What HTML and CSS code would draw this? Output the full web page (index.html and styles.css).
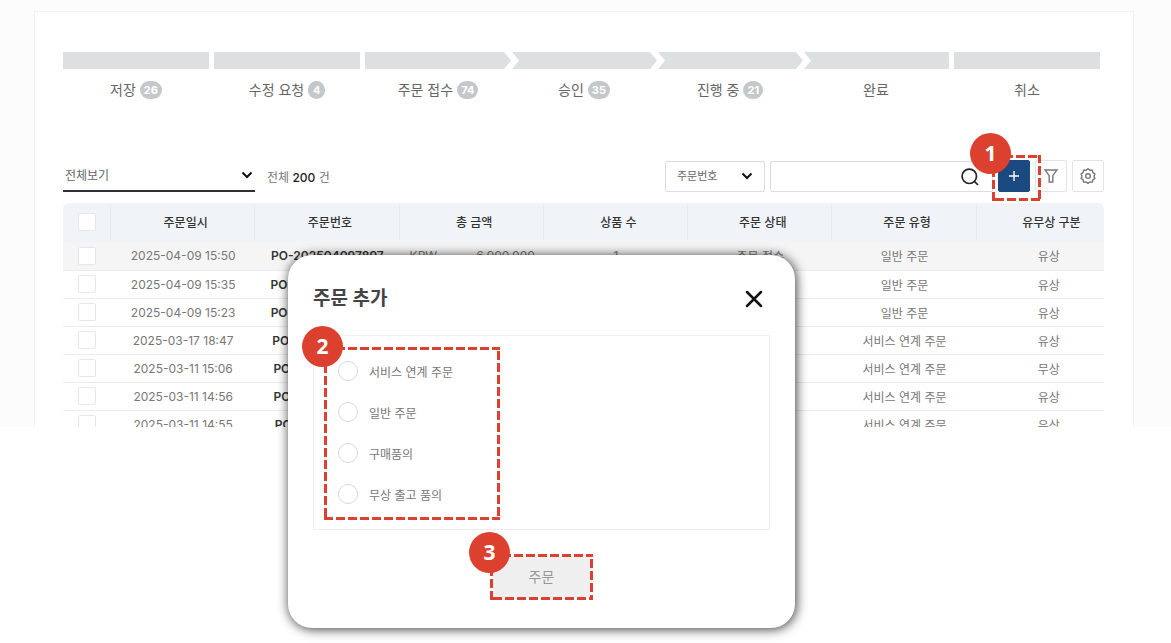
FILE: index.html
```html
<!DOCTYPE html>
<html lang="ko">
<head>
<meta charset="utf-8">
<meta name="viewport" content="width=device-width, initial-scale=1">
<title>주문 관리</title>
<link rel="stylesheet" href="styles.css">
</head>
<body>
<main class="screen">
  <section class="panel">
    <ol class="steps">
      <li class="step"><span class="step-bar"></span><span class="step-label">저장 <span class="count">26</span></span></li>
      <li class="step"><span class="step-bar"></span><span class="step-label">수정 요청 <span class="count">4</span></span></li>
      <li class="step step-joined"><span class="step-bar bar-point"></span><span class="step-label">주문 접수 <span class="count">74</span></span></li>
      <li class="step step-joined"><span class="step-bar bar-both"></span><span class="step-label">승인 <span class="count">35</span></span></li>
      <li class="step step-joined"><span class="step-bar bar-both"></span><span class="step-label">진행 중 <span class="count">21</span></span></li>
      <li class="step"><span class="step-bar bar-notch"></span><span class="step-label">완료</span></li>
      <li class="step"><span class="step-bar"></span><span class="step-label">취소</span></li>
    </ol>

    <div class="toolbar">
      <div class="select-wrap view-select">
        <select aria-label="보기"><option>전체보기</option></select>
        <svg class="chevron" viewBox="0 0 12 8" aria-hidden="true"><path d="M1.5 1.5 6 6l4.500-4.500"/></svg>
      </div>
      <p class="total">전체 <b>200</b> 건</p>
      <div class="select-wrap field-select">
        <select aria-label="검색 항목"><option>주문번호</option></select>
        <svg class="chevron" viewBox="0 0 12 8" aria-hidden="true"><path d="M1.5 1.5 6 6l4.500-4.500"/></svg>
      </div>
      <div class="search">
        <input type="text" aria-label="검색어">
        <button class="search-button" type="button" aria-label="검색">
          <svg viewBox="0 0 18 18" aria-hidden="true"><circle cx="8.300" cy="8.300" r="7.200"/><path d="m13.500 13.500 3.500 3.500"/></svg>
        </button>
      </div>
      <div class="marked">
        <button class="tool tool-add" type="button" aria-label="주문 추가">
          <svg viewBox="0 0 16 16" aria-hidden="true"><path d="M8 3v10M3 8h10"/></svg>
        </button>
        <svg class="frame frame-add" aria-hidden="true"><rect width="100%" height="100%"/></svg>
        <span class="pin pin-add">1</span>
      </div>
      <button class="tool" type="button" aria-label="필터">
        <svg viewBox="0 0 16 16" aria-hidden="true"><path d="M2 2h12L9.800 7.700V14H6.200V7.700z"/></svg>
      </button>
      <button class="tool" type="button" aria-label="설정">
        <svg viewBox="0 0 16 16" aria-hidden="true"><path d="m8 .8 1.900 1.500 2.400-.1.600 2.400 2 1.400-.9 2.200.9 2.200-2 1.400-.6 2.300-2.400-.1L8 15.400 6.100 14l-2.400.1-.6-2.300-2-1.400.9-2.200L1.100 6l2-1.400.6-2.400 2.400.1z"/><circle cx="8" cy="8.100" r="2.300"/></svg>
      </button>
    </div>

    <div class="list">
      <table class="orders">
        <colgroup><col class="col-check"><col span="7"></colgroup>
        <thead>
          <tr>
            <th class="check"><input type="checkbox" aria-label="전체 선택"></th>
            <th>주문일시</th><th>주문번호</th><th>총 금액</th><th>상품 수</th><th>주문 상태</th><th>주문 유형</th><th>유무상 구분</th>
          </tr>
        </thead>
        <tbody>
          <tr class="active"><td class="check"><input type="checkbox" aria-label="선택"></td><td>2025-04-09 15:50</td><td class="number">PO-202504097897</td><td><span class="money"><span>KRW</span><span>6,900,000</span></span></td><td>1</td><td>주문 접수</td><td>일반 주문</td><td>유상</td></tr>
          <tr><td class="check"><input type="checkbox" aria-label="선택"></td><td>2025-04-09 15:35</td><td class="number">PO-202504097896</td><td></td><td></td><td></td><td>일반 주문</td><td>유상</td></tr>
          <tr><td class="check"><input type="checkbox" aria-label="선택"></td><td>2025-04-09 15:23</td><td class="number">PO-202504097895</td><td></td><td></td><td></td><td>일반 주문</td><td>유상</td></tr>
          <tr><td class="check"><input type="checkbox" aria-label="선택"></td><td>2025-03-17 18:47</td><td class="number">PO-202503177894</td><td></td><td></td><td></td><td>서비스 연계 주문</td><td>유상</td></tr>
          <tr><td class="check"><input type="checkbox" aria-label="선택"></td><td>2025-03-11 15:06</td><td class="number">PO-202503117893</td><td></td><td></td><td></td><td>서비스 연계 주문</td><td>무상</td></tr>
          <tr><td class="check"><input type="checkbox" aria-label="선택"></td><td>2025-03-11 14:56</td><td class="number">PO-202503117892</td><td></td><td></td><td></td><td>서비스 연계 주문</td><td>유상</td></tr>
          <tr><td class="check"><input type="checkbox" aria-label="선택"></td><td>2025-03-11 14:55</td><td class="number">PO-202503117891</td><td></td><td></td><td></td><td>서비스 연계 주문</td><td>유상</td></tr>
        </tbody>
      </table>
    </div>
  </section>
</main>

<div class="modal" role="dialog" aria-labelledby="modal-title">
  <header class="modal-head">
    <h2 id="modal-title">주문 추가</h2>
    <button class="close" type="button" aria-label="닫기">
      <svg viewBox="0 0 18 18" aria-hidden="true"><path d="m2 2 14 14M16 2 2 16"/></svg>
    </button>
  </header>
  <div class="modal-box">
    <div class="options marked">
      <label class="option"><input type="radio" name="kind">서비스 연계 주문</label>
      <label class="option"><input type="radio" name="kind">일반 주문</label>
      <label class="option"><input type="radio" name="kind">구매품의</label>
      <label class="option"><input type="radio" name="kind">무상 출고 품의</label>
      <svg class="frame frame-options" aria-hidden="true"><rect width="100%" height="100%"/></svg>
      <span class="pin pin-options">2</span>
    </div>
  </div>
  <footer class="modal-foot">
    <div class="marked">
      <button class="submit" type="button">주문</button>
      <svg class="frame frame-submit" aria-hidden="true"><rect width="100%" height="100%"/></svg>
      <span class="pin pin-submit">3</span>
    </div>
  </footer>
</div>
</body>
</html>
```
FILE: styles.css
```css
* { box-sizing: border-box; }

body {
  margin: 0;
  background: #fff;
  color: #666;
  font-family: Inter, "Noto Sans CJK KR", sans-serif;
  font-size: 12px;
}

button, input, select { font: inherit; color: inherit; margin: 0; }
button { padding: 0; border: 0; background: none; }
svg { fill: none; stroke: currentColor; display: block; }

.screen { background: #fcfcfc; padding: 11px 37px 0 34px; }

.panel {
  background: #fff;
  border: 1px solid #f1f1f1;
  border-bottom: 0;
  padding: 40px 29px 0 28px;
}

/* Progress steps */
.steps {
  display: flex;
  list-style: none;
  margin: 0;
  padding: 0 4px 0 0;
}
.step { flex: 1 1 0; margin-right: 5px; }
.step-joined { margin-right: 0; }
.step:last-child { margin-right: 0; }
.step-bar { display: block; height: 17px; background: #dedfe1; }
.bar-point { clip-path: polygon(0 0, calc(100% - 7px) 0, 100% 50%, calc(100% - 7px) 100%, 0 100%); }
.bar-both { clip-path: polygon(1px 0, calc(100% - 7px) 0, 100% 50%, calc(100% - 7px) 100%, 1px 100%, 8px 50%); }
.bar-notch { clip-path: polygon(1px 0, 100% 0, 100% 100%, 1px 100%, 8px 50%); }
.step-label {
  display: flex;
  align-items: center;
  justify-content: center;
  gap: 4px;
  margin-top: 11px;
  height: 20px;
  font-size: 14px;
  line-height: 20px;
}
.count {
  min-width: 17px;
  padding: 0 4px;
  border-radius: 9px;
  background: #c5c8ca;
  color: #fff;
  font-size: 11px;
  font-weight: 700;
  line-height: 18px;
  text-align: center;
}

/* Toolbar */
.toolbar {
  display: flex;
  align-items: center;
  gap: 5px;
  margin-top: 60px;
}
.select-wrap { position: relative; }
.select-wrap select {
  appearance: none;
  width: 100%;
  border: 0;
  background: transparent;
}
.chevron {
  position: absolute;
  top: 11px;
  width: 12px;
  height: 8px;
  color: #111;
  stroke-width: 2;
  pointer-events: none;
}
.view-select { width: 192px; border-bottom: 2px solid #2b3036; }
.view-select select { height: 30px; padding: 0 2px; }
.view-select .chevron { right: 2px; }
.total { margin: 0 auto 0 7px; color: #777; }
.total b { color: #222; font-size: 12px; font-weight: 500; }
.field-select { width: 100px; }
.field-select select {
  height: 31px;
  padding: 0 11px;
  border: 1px solid #d9dce3;
  border-radius: 2px;
  font-size: 11px;
}
.field-select .chevron { right: 12px; }
.search { position: relative; width: 223px; }
.search input {
  display: block;
  width: 100%;
  height: 31px;
  padding: 0 36px 0 10px;
  border: 1px solid #d9dce3;
  border-radius: 2px;
}
.search-button { position: absolute; right: 14px; top: 7px; }
.search-button svg { width: 18px; height: 18px; color: #222; stroke-width: 1.700; }
.tool {
  display: grid;
  place-items: center;
  width: 32px;
  height: 32px;
  border: 1px solid #e3e4e6;
  border-radius: 2px;
  color: #777;
}
.tool svg { width: 16px; height: 16px; stroke-width: 1.400; }
.tool-add { border-color: #1b4a80; background: #1b4a80; color: #fff; }
.marked { position: relative; }

/* Orders table */
.list {
  margin-top: 11px;
  max-height: 224px;
  overflow: hidden;
  border-radius: 6px 6px 0 0;
}
.orders {
  width: calc(100% + 17px);
  table-layout: fixed;
  border-collapse: collapse;
  text-align: center;
}
.orders th, .orders td { padding: 0; white-space: nowrap; }
.col-check { width: 48px; }
.orders th {
  height: 39px;
  padding: 0 0 2px 5px;
  background: linear-gradient(#e3ebf0, #e3ebf0) right center / 1px 35px no-repeat #f0f4f8;
  color: #333;
  font-weight: 500;
}
.orders .check { padding-left: 0; }
.orders td {
  height: 28px;
  border-bottom: 1px solid #ececec;
  color: #777;
}
.orders td.number { color: #333; font-weight: 600; }
.active td { background: #f5f5f5; }
.money { display: flex; justify-content: space-between; padding: 0 9px 0 10px; }
.orders input {
  appearance: none;
  display: block;
  width: 18px;
  height: 18px;
  margin: 0 auto;
  border: 1px solid #e4e7ec;
  border-radius: 2px;
  background: #fff;
}

/* Modal */
.modal {
  position: absolute;
  left: 288px;
  top: 255px;
  width: 507px;
  padding: 30px 25px 31px;
  border-radius: 24px;
  background: #fff;
  box-shadow: 1px 1px 12px rgba(0, 0, 0, 0.8);
}
.modal-head { display: flex; align-items: center; justify-content: space-between; height: 28px; }
.modal-head h2 { margin: 0; color: #444; font-size: 19px; font-weight: 700; line-height: 28px; }
.close { margin-right: 7px; color: #111; }
.close svg { width: 18px; height: 18px; stroke-width: 2.500; stroke-linecap: round; }
.modal-box { margin-top: 22px; padding: 25px 24px; border: 1px solid #eee; }
.options { display: grid; gap: 21px; }
.option { display: flex; align-items: center; gap: 11px; height: 20px; color: #777; }
.option input {
  appearance: none;
  width: 20px;
  height: 20px;
  border: 1px solid #d5d9e0;
  border-radius: 50%;
}
.modal-foot { display: flex; justify-content: center; margin-top: 27px; }
.submit { width: 97px; height: 40px; padding-bottom: 3px; display: block; background: #efefef; color: #999; font-size: 14px; }

/* Numbered callouts */
.frame { position: absolute; pointer-events: none; stroke: #dc4130; stroke-width: 6; stroke-dasharray: 9 3; }
.pin {
  position: absolute;
  width: 41px;
  height: 41px;
  border-radius: 50%;
  background: #dc4130;
  color: #fff;
  font: 700 21px/41px "Noto Sans", sans-serif;
  text-align: center;
}
.frame-add { left: -6px; top: -5px; width: 49px; height: 46px; }
.pin-add { left: -28px; top: -27px; }
.frame-options { left: -14px; top: -14px; width: 176px; height: 173px; }
.pin-options { left: -36px; top: -35px; }
.frame-submit { left: -3px; top: -3px; width: 103px; height: 46px; }
.pin-submit { left: -24px; top: -25px; }
```
